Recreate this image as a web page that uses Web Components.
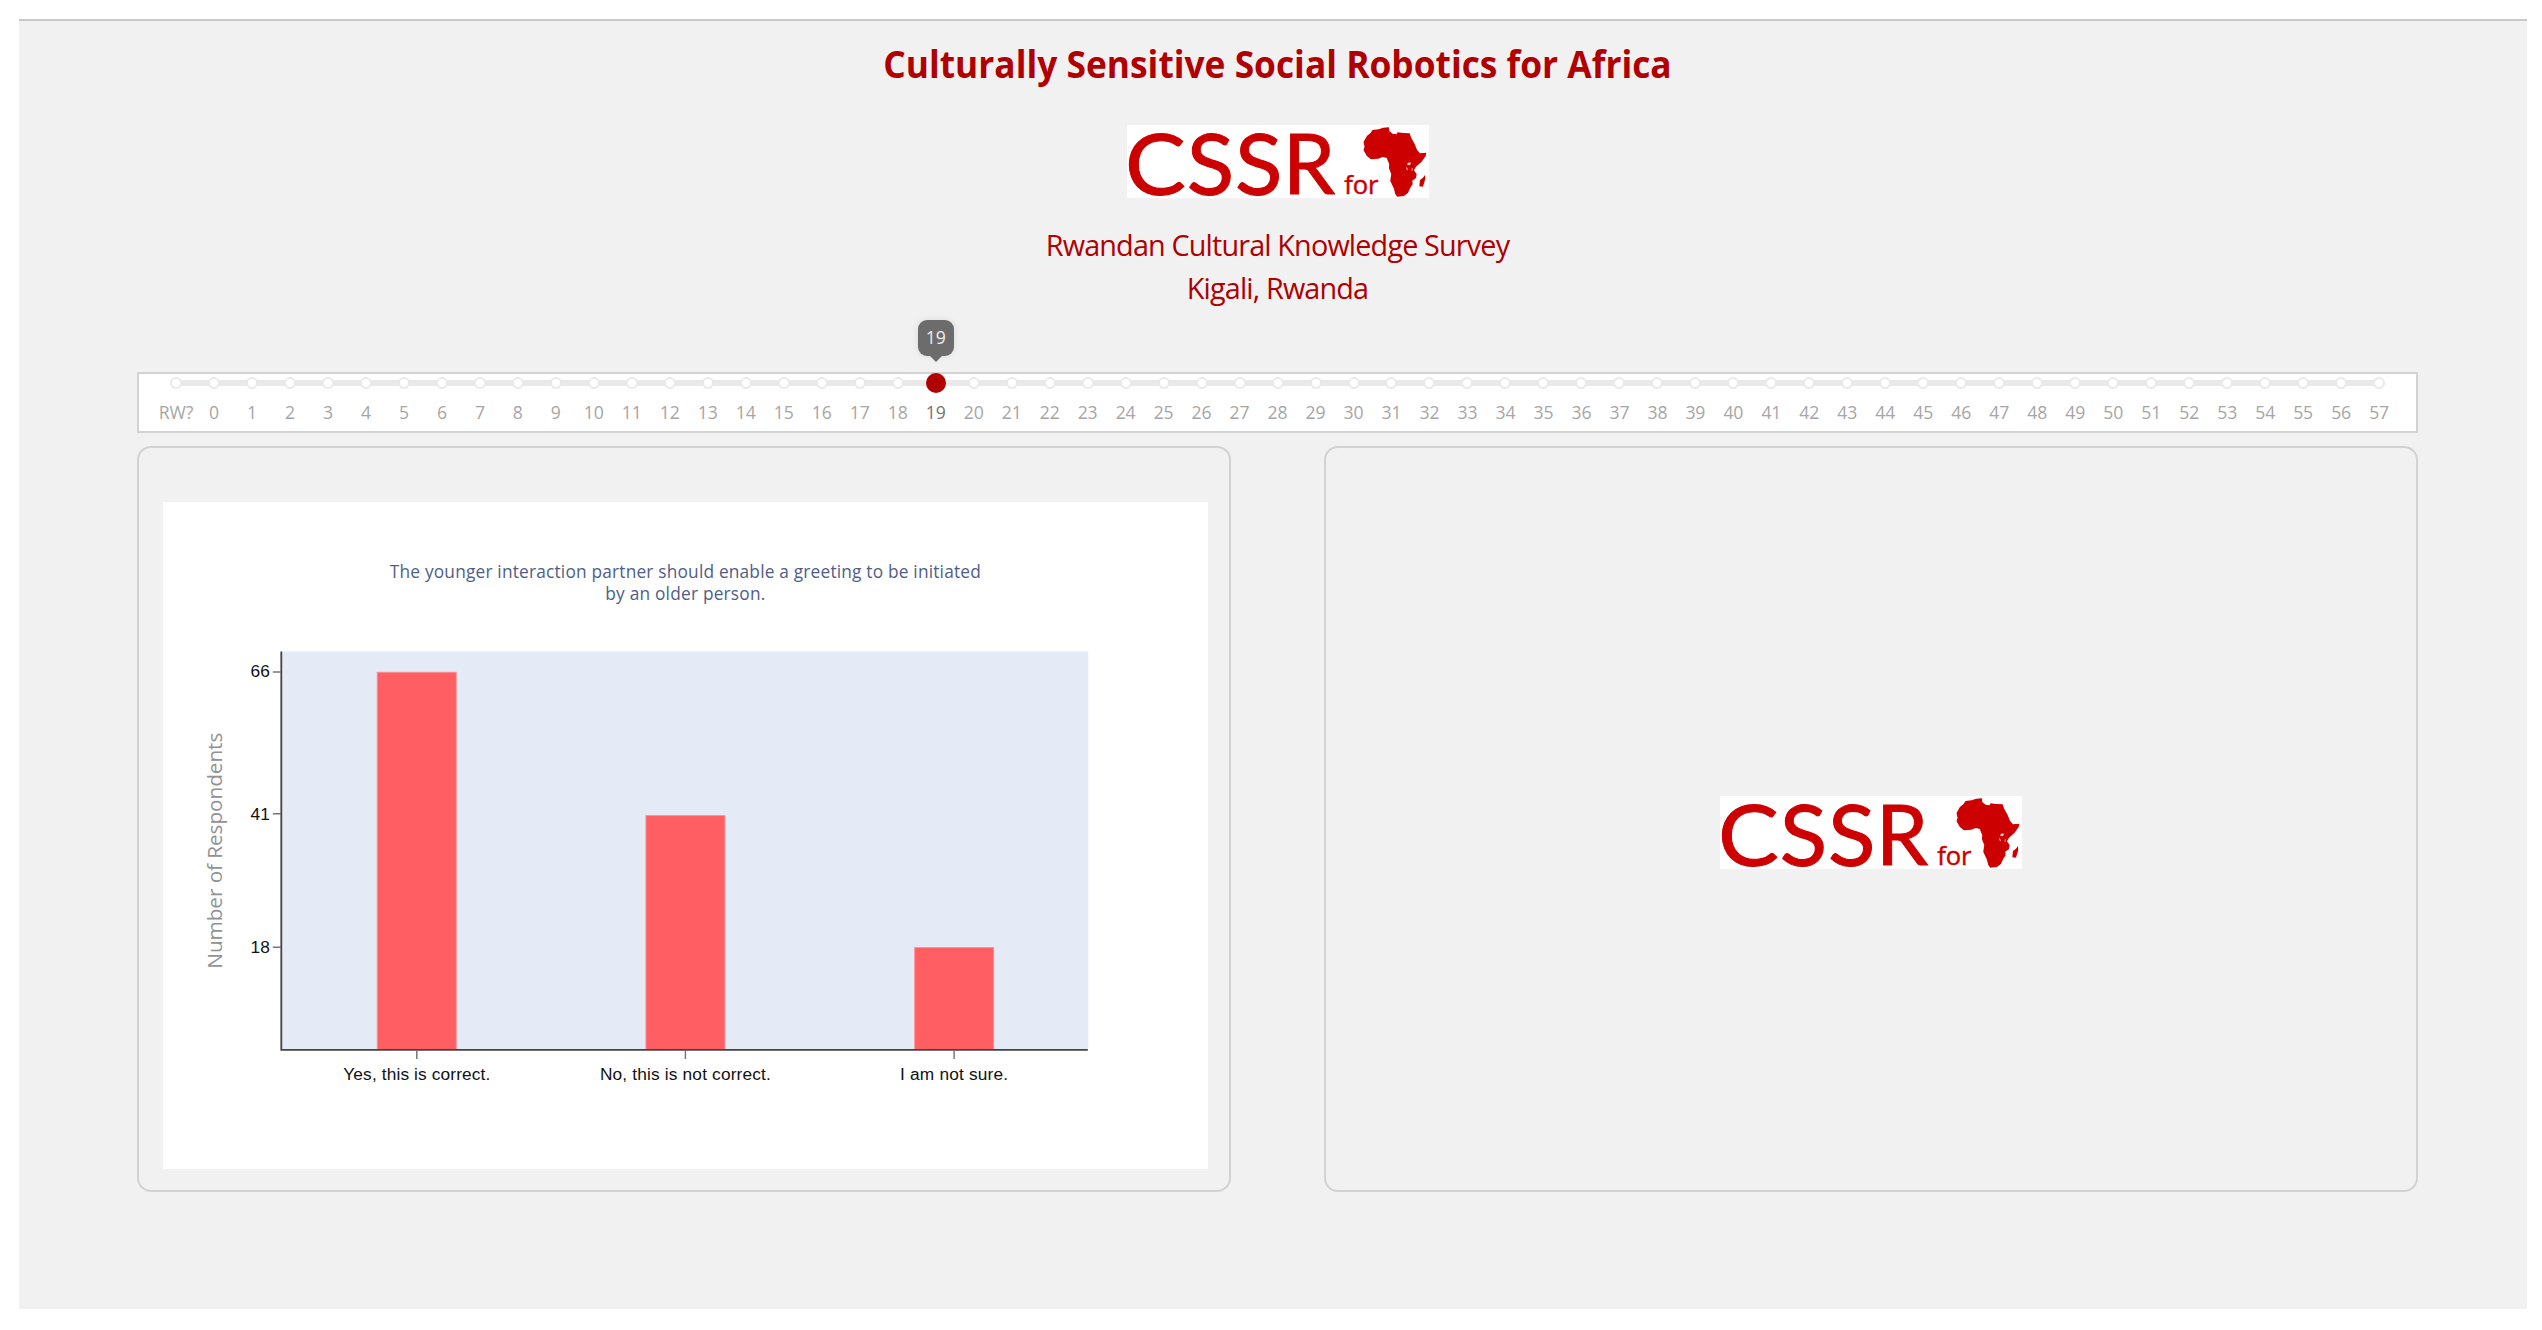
<!DOCTYPE html>
<html lang="en">
<head>
<meta charset="utf-8">
<title>Culturally Sensitive Social Robotics for Africa</title>
<style>
html,body{margin:0;background:#fff}
body{font-family:"Open Sans",sans-serif}
</style>
</head>
<body>
<survey-app></survey-app>
<script>
const define=(name,html)=>customElements.define(name,class extends HTMLElement{
  constructor(){super();this.attachShadow({mode:"open"}).innerHTML=typeof html==="function"?html():html}
});

define("cssr-logo",`
<style>:host{display:block;width:302px;height:73px;background:#fff}svg{display:block;overflow:visible}</style>
<svg width="302" height="73" viewBox="51 46 904 219" preserveAspectRatio="none" fill="#c00">
<g font-family="Lato,sans-serif" font-size="258" stroke="#c00" stroke-width="3">
<text y="254.5" x="45" textLength="182" lengthAdjust="spacingAndGlyphs">C</text>
<text y="254.5" x="230" textLength="142" lengthAdjust="spacingAndGlyphs">S</text>
<text y="254.5" x="374" textLength="142" lengthAdjust="spacingAndGlyphs">S</text>
<text y="252" x="518" font-size="250" textLength="156" lengthAdjust="spacingAndGlyphs">R</text>
</g>
<text x="701" y="252" font-family="Open Sans,sans-serif" font-size="79" stroke="#c00" stroke-width="1.5" textLength="103" lengthAdjust="spacingAndGlyphs">for</text>
<path d="M786 61L804 59L818 54L835 53L836 64L846 72L858 74L861 68L878 70L897 71L902 85L911 101L919 120L928 131L947 129L945 139L933 156L916 171L910 182L918 193L916 205L905 213L906 224L899 234L892 250L880 259L860 261L854 253L850 237L839 213L842 193L835 176L836 163L831 152L829 145L817 142L803 147L781 149L769 139L759 122L762 111L759 97L769 79L780 70Z"/>
<path d="M943 196L944 207L937 231L926 230L928 211L937 204Z"/>
<path fill="#fff" fill-opacity=".8" d="M891 160L899 158L901 163L896 167L890 165ZM886 174L889 173L892 182L889 181ZM904 174L906 175L905 184L903 183Z"/>
</svg>`);

define("survey-header",`
<style>
:host{display:flex;flex-direction:column;align-items:center;color:#b00000}
h1{margin:0;padding-top:17px;font-size:38.4px;line-height:50px;font-weight:700;white-space:nowrap;transform:scaleX(.92)}
cssr-logo{margin-top:37px}
p{margin:0;font-size:28.8px;line-height:43.4px;text-align:center;letter-spacing:-.85px}
.sub{padding-top:25px}
</style>
<h1>Culturally Sensitive Social Robotics for Africa</h1>
<cssr-logo></cssr-logo>
<div class="sub"><p>Rwandan Cultural Knowledge Survey</p><p>Kigali, Rwanda</p></div>`);

define("question-slider",()=>{
  const active=19;
  const marks=["RW?",...Array.from({length:58},(_,i)=>String(i))];
  return `<style>
:host{display:block;box-sizing:border-box;height:61px;border:2px solid #d3d3d3;background:#fff;padding:3px 0 0 18px;color:#999;font-size:17.6px}
.row{display:flex;width:2242px;height:100%;background:linear-gradient(#e9e9e9,#e9e9e9) 19px 3px/2204px 6px no-repeat}
.m{position:relative;width:37.985px;flex:none;display:flex;flex-direction:column;align-items:center}
.m i{box-sizing:border-box;width:12px;height:12px;border:2px solid #e9e9e9;border-radius:50%;background:#fff}
.m span{line-height:24px;margin-top:11.5px;letter-spacing:-.1px;color:#a6a6a6}
.m.on span{color:#747474}
.h{position:absolute;left:9px;top:-4px;width:20px;height:20px;border-radius:50%;background:#b00000}
.tip{position:absolute;left:1px;top:-57px;width:36px;height:36px;border-radius:9px;background:#6c6c6c;color:#eee;text-align:center;line-height:35px;box-shadow:0 0 6px #d9d9d9}
.tip:after{content:"";position:absolute;left:12px;top:36px;border:6px solid transparent;border-bottom:0;border-top-color:#6c6c6c}
</style><div class="row">${marks.map(t=>`<div class="m${t==active?" on":""}"><i></i><span>${t}</span>${t==active?`<div class="h"></div><div class="tip">${t}</div>`:""}</div>`).join("")}</div>`;
});

define("survey-panel",`
<style>:host{box-sizing:border-box;display:flex;flex:none;width:1094px;height:746px;border:2px solid #d2d2d2;border-radius:14px;align-items:center;justify-content:center}</style>
<slot></slot>`);

define("response-chart",()=>{
  const bars=[[417,671.4,66,"Yes, this is correct.",147],[685.6,814.6,41,"No, this is not correct.",171],[954.3,946.6,18,"I am not sure.",108]];
  return `<style>:host{display:block;width:1045px;height:667px;background:#fff;margin:33px 0 0 2px}svg{display:block}</style>
<svg width="1045" height="667" viewBox="163.2 501.6 1045 667">
<rect x="282" y="651" width="806.5" height="398" fill="#e4eaf6"/>
<g fill="#4f5d8a" font-family="Open Sans,sans-serif" font-size="17.3" text-anchor="middle">
<text x="685.5" y="578" textLength="591">The younger interaction partner should enable a greeting to be initiated</text>
<text x="685.5" y="600" textLength="160">by an older person.</text></g>
${bars.map(([x,y])=>`<rect x="${x-40}" y="${y}" width="80" height="${1049.4-y}" fill="#ff9296"/><rect x="${x-39}" y="${y+1}" width="78" height="${1048.4-y}" fill="#ff5e62"/>`).join("")}
<path d="M281.5 651V1050.4M280.7 1049.5H1088" stroke="#444" stroke-width="1.8" fill="none"/>
${bars.map(([x,y,n,t,w])=>`<path d="M273 ${n==41?813.4:y+.3}H281M${x} 1050V1058.5" stroke="#777" stroke-width="1.5"/>
<g font-family="Liberation Sans,sans-serif" font-size="17.3" fill="#111"><text x="270" y="${n==41?820:n==66?677:952.7}" text-anchor="end">${n}</text>
<text x="${x}" y="1080" text-anchor="middle" textLength="${w}">${t}</text></g>`).join("")}
<text transform="translate(221.7 850.3) rotate(-90)" text-anchor="middle" font-family="Open Sans,sans-serif" font-size="20.8" fill="#929292" textLength="236">Number of Respondents</text>
</svg>`;
});

define("survey-app",`
<style>
:host{display:block;box-sizing:border-box;width:2508px;height:1290px;margin:19px 0 0 19px;border-top:2px solid #c8c8c8;background:#f1f1f1}
main{display:flex;flex-direction:column;padding:0 109px 0 118px}
question-slider{margin-top:62px}
.panels{display:flex;justify-content:space-between;margin-top:13px}
.panels cssr-logo{margin-top:28px}
</style>
<main>
<survey-header></survey-header>
<question-slider></question-slider>
<div class="panels"><survey-panel><response-chart></response-chart></survey-panel><survey-panel><cssr-logo></cssr-logo></survey-panel></div>
</main>`);
</script>
</body>
</html>
